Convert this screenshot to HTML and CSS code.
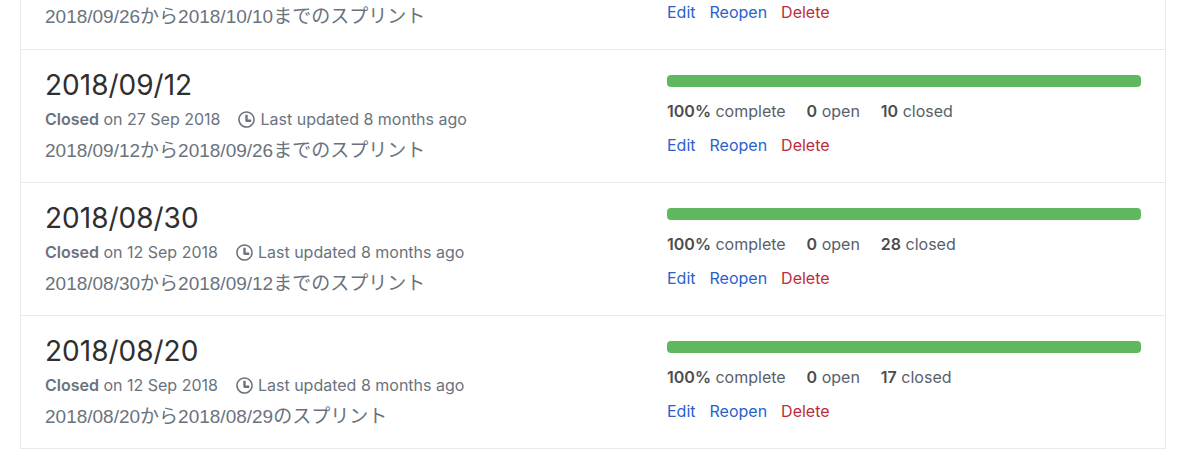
FILE: index.html
```html
<!DOCTYPE html>
<html lang="en">
<head>
<meta charset="utf-8">
<title>Milestones</title>
<link rel="stylesheet" href="styles.css">
</head>
<body>
<svg class="sprite" aria-hidden="true"><symbol id="clock" viewBox="0 0 14 16"><path fill-rule="evenodd" d="M8 8h3v2H7c-.55 0-1-.45-1-1V4h2v4zM7 2.3c3.14 0 5.7 2.56 5.7 5.7s-2.56 5.7-5.7 5.7A5.71 5.71 0 0 1 1.3 8c0-3.14 2.56-5.7 5.7-5.7zM7 1C3.14 1 0 4.14 0 8s3.14 7 7 7 7-3.14 7-7-3.14-7-7-7z"/></symbol></svg>
<main>
<ul class="milestones">
<li class="milestone continued">
<div class="info">
<p class="description">2018/09/26から2018/10/10までのスプリント</p>
</div>
<div class="progress">
<div class="actions"><a href="#">Edit</a><button type="button">Reopen</button><button type="button" class="danger">Delete</button></div>
</div>
</li>
<li class="milestone">
<div class="info">
<h2 class="title">2018/09/12</h2>
<div class="meta"><span><b>Closed</b> on 27 Sep 2018</span><span class="updated"><svg class="icon"><use href="#clock"/></svg>Last updated 8 months ago</span></div>
<p class="description">2018/09/12から2018/09/26までのスプリント</p>
</div>
<div class="progress">
<div class="bar"><div class="fill" style="width:100%"></div></div>
<div class="stats"><span><b>100%</b> complete</span><span><b>0</b> open</span><span><b>10</b> closed</span></div>
<div class="actions"><a href="#">Edit</a><button type="button">Reopen</button><button type="button" class="danger">Delete</button></div>
</div>
</li>
<li class="milestone">
<div class="info">
<h2 class="title">2018/08/30</h2>
<div class="meta"><span><b>Closed</b> on 12 Sep 2018</span><span class="updated"><svg class="icon"><use href="#clock"/></svg>Last updated 8 months ago</span></div>
<p class="description">2018/08/30から2018/09/12までのスプリント</p>
</div>
<div class="progress">
<div class="bar"><div class="fill" style="width:100%"></div></div>
<div class="stats"><span><b>100%</b> complete</span><span><b>0</b> open</span><span><b>28</b> closed</span></div>
<div class="actions"><a href="#">Edit</a><button type="button">Reopen</button><button type="button" class="danger">Delete</button></div>
</div>
</li>
<li class="milestone">
<div class="info">
<h2 class="title">2018/08/20</h2>
<div class="meta"><span><b>Closed</b> on 12 Sep 2018</span><span class="updated"><svg class="icon"><use href="#clock"/></svg>Last updated 8 months ago</span></div>
<p class="description">2018/08/20から2018/08/29のスプリント</p>
</div>
<div class="progress">
<div class="bar"><div class="fill" style="width:100%"></div></div>
<div class="stats"><span><b>100%</b> complete</span><span><b>0</b> open</span><span><b>17</b> closed</span></div>
<div class="actions"><a href="#">Edit</a><button type="button">Reopen</button><button type="button" class="danger">Delete</button></div>
</div>
</li>
</ul>
</main>
</body>
</html>
```

FILE: styles.css
```css
* { box-sizing: border-box; }
body {
  margin: 0;
  background: #fff;
  color: #586069;
  font-family: Inter, "Noto Sans CJK JP", sans-serif;
  font-size: 16px;
  line-height: 24px;
}
.sprite { display: none; }
main { padding: 0 34px 24px 20px; }
.milestones {
  margin: 0;
  padding: 0;
  list-style: none;
  border: 1px solid #e8eaee;
  border-top: 0;
}
.milestone {
  display: grid;
  grid-template-columns: 622fr 474fr;
  padding: 16px 24px 14px;
}
.milestone + .milestone { border-top: 1px solid #e8eaee; }
.title {
  margin: 0;
  color: #2f2f2f;
  font-size: 28px;
  font-weight: 400;
  line-height: 38px;
}
.meta, .stats, .actions { display: flex; white-space: nowrap; }
.meta { gap: 18px; line-height: 30px; color: #6a737d; }
b { font-weight: 600; }
.updated { display: flex; align-items: center; gap: 5px; }
.icon { width: 17px; height: 19px; fill: currentColor; }
.description {
  margin: 0;
  color: #6a737d;
  font-family: "Liberation Sans", "Noto Sans CJK JP", sans-serif;
  font-size: 19px;
  line-height: 34px;
}
.bar {
  height: 12px;
  margin-top: 9px;
  border-radius: 4px;
  background: #eaecef;
  overflow: hidden;
}
.fill { height: 100%; background: #5fb85d; }
.stats { gap: 21px; margin-top: 12px; }
.stats b { color: #4c4c4c; }
.actions { gap: 14px; margin-top: 10px; }
.actions a, .actions button {
  padding: 0;
  border: 0;
  background: none;
  color: #2962cc;
  font: inherit;
  text-decoration: none;
  cursor: pointer;
}
.actions .danger { color: #bd2c38; }
/* Only the closing lines of this entry are listed. */
.continued { padding: 0 24px 15px; }
.continued .actions { margin-top: 0; }
```
